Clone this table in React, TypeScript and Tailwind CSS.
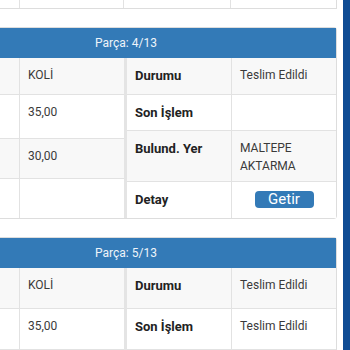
import React from 'react';

type Row = { h: number; label: string; value?: string[]; button?: boolean };

const leftRows = (cells: string[], heights: number[]) =>
  heights.map((h, i) => ({ h, text: cells[i] ?? '' }));

const Panel = ({ part, left, right }: { part: string; left: { h: number; text: string }[]; right: Row[] }) => (
  <div className="w-[422px] border border-[#dddddd] rounded-[3px] bg-white">
    <div className="h-[30px] bg-[#337ab7] flex items-center justify-center text-[12px] text-[#eef4fa]">
      Parça: {part}
    </div>
    <div className="flex">
      <div className="flex flex-col w-[208px]">
        {left.map((r, i) => (
          <div
            key={i}
            style={{ height: r.h }}
            className={`flex ${i % 2 === 0 ? 'bg-[#f8f8f8]' : 'bg-white'} ${i < left.length - 1 ? 'border-b border-[#e2e2e2]' : ''}`}
          >
            <div className="w-[104px] border-r border-[#e2e2e2]" />
            <div className="w-[104px] px-2 pt-[8px] text-[12px] leading-[18px] text-[#3a3a3a]">{r.text}</div>
          </div>
        ))}
      </div>
      <div className="w-[3px] bg-[#e4e4e4]" />
      <div className="flex flex-col w-[209px]">
        {right.map((r, i) => (
          <div
            key={i}
            style={{ height: r.h }}
            className={`flex ${i % 2 === 0 ? 'bg-[#f8f8f8]' : 'bg-white'} ${i < right.length - 1 ? 'border-b border-[#e2e2e2]' : ''}`}
          >
            <div className="w-[105px] border-r border-[#e2e2e2] px-2 pt-[8px] text-[13px] leading-[19px] font-bold text-[#222222]">
              {r.label}
            </div>
            <div className="w-[104px] px-2 pt-[8px] text-[12px] leading-[18px] text-[#3a3a3a]">
              {r.button ? (
                <div className="flex justify-center pt-[1px]">
                  <button className="w-[59px] h-[17px] rounded-[4px] bg-[#337ab7] text-white text-[15px] leading-[17px]">
                    Getir
                  </button>
                </div>
              ) : (
                r.value?.map((v, j) => <div key={j}>{v}</div>)
              )}
            </div>
          </div>
        ))}
      </div>
    </div>
  </div>
);

export default function App() {
  return (
    <div className="w-[350px] h-[350px] overflow-hidden bg-white flex font-['Roboto',sans-serif]">
      <div className="w-[343px] overflow-hidden">
        <div className="ml-[-85px] w-[422px]">
          <div className="flex h-[9px] border-b border-[#dddddd]">
            <div className="w-[105px] border-r border-[#e2e2e2]" />
            <div className="w-[104px] border-r border-[#e2e2e2]" />
            <div className="w-[107px] border-r border-[#e2e2e2]" />
            <div className="w-[106px] border-r border-[#dddddd]" />
          </div>
          <div className="h-[18px]" />
          <Panel
            part="4/13"
            left={leftRows(['KOLİ', '35,00', '30,00', ''], [37, 44, 40, 39])}
            right={[
              { h: 37, label: 'Durumu', value: ['Teslim Edildi'] },
              { h: 36, label: 'Son İşlem', value: [] },
              { h: 51, label: 'Bulund. Yer', value: ['MALTEPE', 'AKTARMA'] },
              { h: 36, label: 'Detay', button: true },
            ]}
          />
          <div className="h-[18px]" />
          <Panel
            part="5/13"
            left={leftRows(['KOLİ', '35,00', '', ''], [41, 41, 40, 39])}
            right={[
              { h: 41, label: 'Durumu', value: ['Teslim Edildi'] },
              { h: 41, label: 'Son İşlem', value: ['Teslim Edildi'] },
              { h: 40, label: 'Bulund. Yer', value: [] },
              { h: 39, label: 'Detay', button: true },
            ]}
          />
        </div>
      </div>
      <div className="w-[7px] bg-[#0f4c94]" />
    </div>
  );
}
